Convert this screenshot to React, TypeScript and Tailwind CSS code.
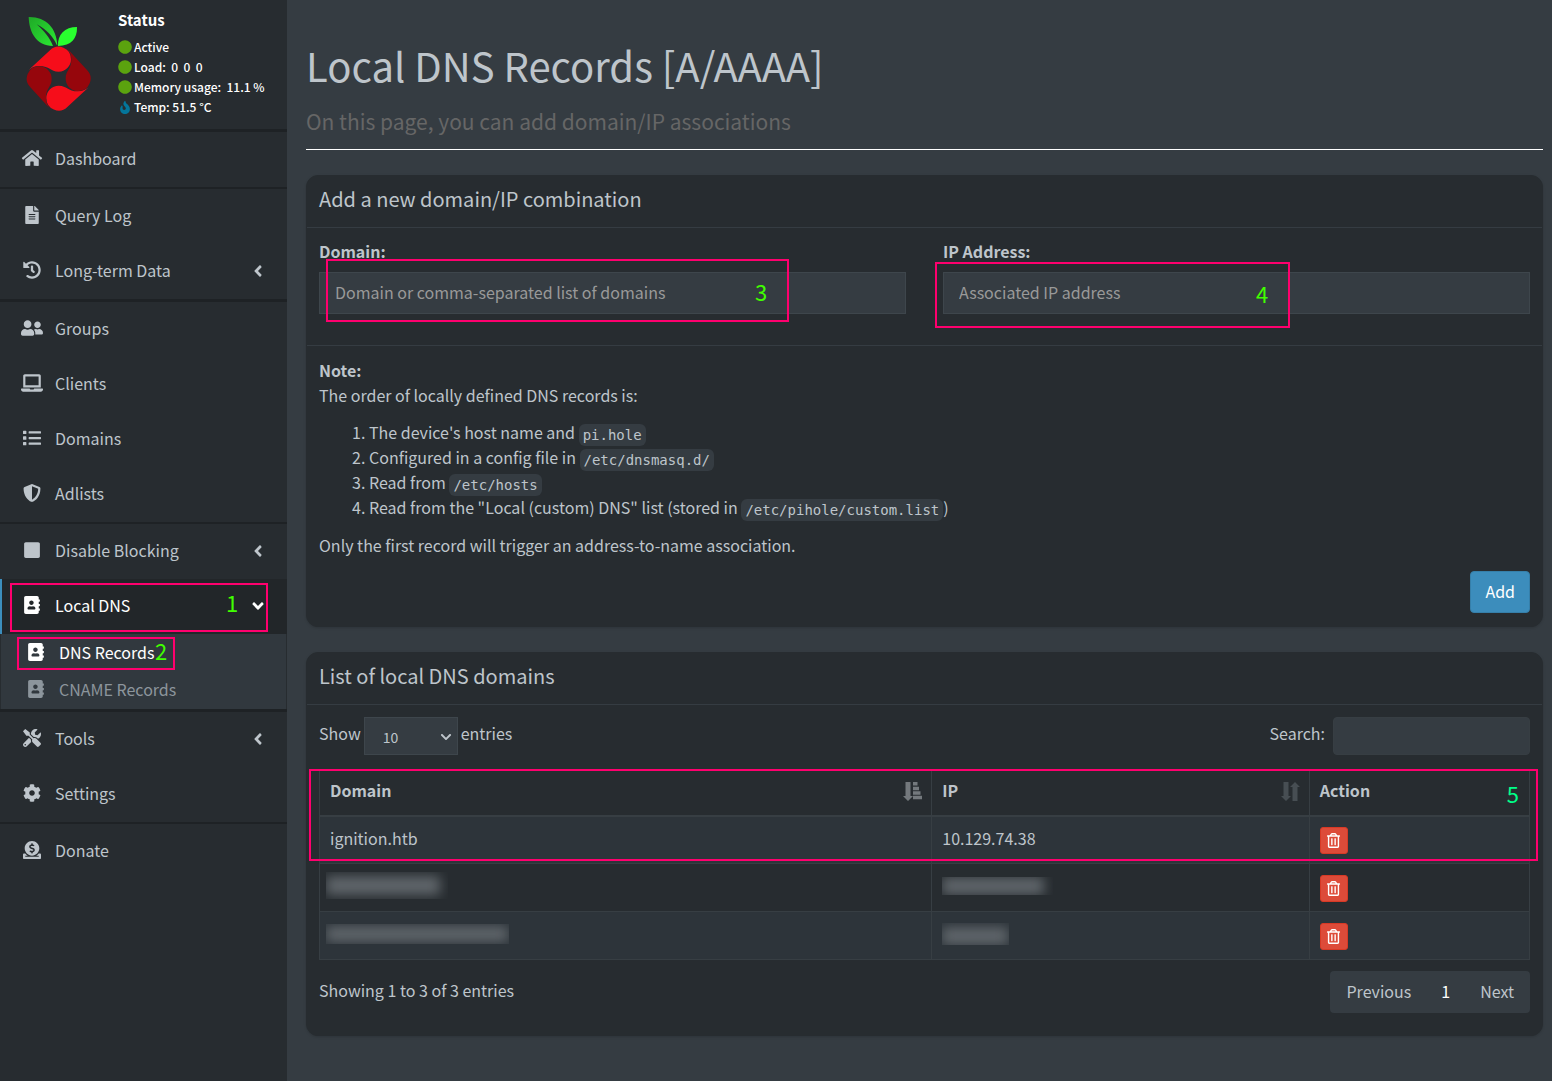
import { useState, type ReactNode } from "react";
import {
  FaAddressBook,
  FaAngleDown,
  FaAngleLeft,
  FaChevronDown,
  FaCircle,
  FaCog,
  FaDonate,
  FaFileAlt,
  FaFire,
  FaHistory,
  FaHome,
  FaLaptop,
  FaList,
  FaRegTrashAlt,
  FaShieldAlt,
  FaSquare,
  FaTools,
  FaUserFriends,
} from "react-icons/fa";
import type { IconType } from "react-icons";

const PETAL =
  "M86 210 L150 151 A37 37 0 0 1 213 178 A37 37 0 0 1 176 215 C150 215 150 198 118 198 C104 198 94 203 86 210 Z";

function Logo() {
  return (
    <svg viewBox="78 48 198 288" className="h-24 w-[66px] shrink-0" aria-label="Pi-hole" role="img">
      <defs>
        <linearGradient id="leaf" x1="0" y1="0" x2="1" y2="1">
          <stop offset="0" stopColor="#1fa827" />
          <stop offset="1" stopColor="#2bea33" />
        </linearGradient>
      </defs>
      <path d="M86 51 C138 50 170 84 172 136 L170 134 C160 112 140 88 110 73 C130 90 150 114 159 138 C108 136 88 98 86 51 Z" fill="url(#leaf)" />
      <path d="M231 81 C232 116 214 137 174 138 C172 104 194 81 231 81 Z" fill="#29ff2f" />
      <path d={PETAL} fill="#f60d1a" />
      <path d={PETAL} fill="#f60d1a" transform="rotate(180 176 236)" />
      <path d={PETAL} fill="#96060c" transform="rotate(-90 176 236)" />
      <path d={PETAL} fill="#96060c" transform="rotate(90 176 236)" />
    </svg>
  );
}

function SortIcon({ sorted }: { sorted?: boolean }) {
  return (
    <svg
      viewBox="0 0 19 20"
      className={`h-5 w-[19px] ${sorted ? "text-[#74797d]" : "text-[#474e53]"}`}
      fill="currentColor"
      aria-hidden="true"
    >
      <path d="M2.500 0h5v14h2.500L5 19 0 14h2.500z" />
      {sorted ? (
        <path d="M10 0h4.500v3.500H10zM10 4.700h6v3.500h-6zM10 9.200h7.500v3.500H10zM10 13.800h9v3.500h-9z" />
      ) : (
        <path d="M11.500 19h5V5H19l-5-5-5 5h2.500z" />
      )}
    </svg>
  );
}

function Marker({ className, children }: { className: string; children: ReactNode }) {
  return <span className={`pointer-events-none absolute text-[22px] leading-6 ${className}`}>{children}</span>;
}

function Frame({ className }: { className: string }) {
  return <span className={`pointer-events-none absolute border-2 border-[#ff006e] ${className}`} />;
}

function NavLink({ icon: Icon, label, arrow }: { icon: IconType; label: string; arrow?: boolean }) {
  return (
    <a href="#" className="flex h-[55px] items-center pr-5 pb-[3px] pl-[21px] hover:text-white">
      <Icon className="h-[18px] w-[22px]" />
      <span className="ml-3 flex-1">{label}</span>
      {arrow && <FaAngleLeft className="mt-0.5 size-[18px]" />}
    </a>
  );
}

function SubLink({ label, active }: { label: string; active?: boolean }) {
  return (
    <a href="#" className={`flex flex-1 items-center pb-0.5 pl-[26px] ${active ? "text-white" : "text-[#8c959c]"}`}>
      <FaAddressBook className="size-[18px]" />
      <span className="ml-[14px]">{label}</span>
    </a>
  );
}

function Status({ children, temp }: { children: ReactNode; temp?: boolean }) {
  return (
    <div className="flex h-5 items-center gap-0.5 text-xs font-medium whitespace-pre">
      {temp ? (
        <FaFire className="h-[13px] w-[14px] text-[#04759a]" />
      ) : (
        <FaCircle className="size-[14px] text-[#5ba30f]" />
      )}
      {children}
    </div>
  );
}

function Sidebar() {
  return (
    <aside className="flex w-[287px] shrink-0 flex-col bg-[#272c30]">
      <div className="flex h-[129px] gap-[26px] pt-4 pl-[26px] text-white">
        <Logo />
        <div className="-mt-2">
          <p className="mb-[5px] text-[15px] leading-6 font-bold">Status</p>
          <Status>Active</Status>
          <Status>{"Load:  0  0  0"}</Status>
          <Status>{"Memory usage:  11.1 %"}</Status>
          <Status temp>Temp: 51.5 °C</Status>
        </div>
      </div>
      <nav aria-label="Main">
        <div className="border-t-3 border-[#1e2225]">
          <NavLink icon={FaHome} label="Dashboard" />
        </div>
        <div className="border-t-2 border-[#1e2225]">
          <NavLink icon={FaFileAlt} label="Query Log" />
          <NavLink icon={FaHistory} label="Long-term Data" arrow />
        </div>
        <div className="border-t-3 border-[#1e2225]">
          <NavLink icon={FaUserFriends} label="Groups" />
          <NavLink icon={FaLaptop} label="Clients" />
          <NavLink icon={FaList} label="Domains" />
          <NavLink icon={FaShieldAlt} label="Adlists" />
        </div>
        <div className="border-t-2 border-[#1e2225]">
          <NavLink icon={FaSquare} label="Disable Blocking" arrow />
          <div className="relative">
            <a
              href="#"
              className="flex h-[55px] items-center border-l-2 border-[#3c8dbc] bg-[#222629] pr-5 pb-[3px] pl-[19px] text-white"
            >
              <FaAddressBook className="h-[18px] w-[22px]" />
              <span className="ml-3 flex-1">Local DNS</span>
              <FaAngleDown className="mt-0.5 size-[18px]" />
            </a>
            <Frame className="top-1 left-2.5 h-[49px] w-[258px]" />
            <Marker className="top-[11px] left-[226px] text-[#40ff00]">1</Marker>
          </div>
          <div className="relative mx-px flex h-[75px] flex-col bg-[#31383e]">
            <SubLink label="DNS Records" active />
            <SubLink label="CNAME Records" />
            <Frame className="top-[3px] left-4 h-[33px] w-[158px]" />
            <Marker className="top-1 left-[154px] text-[#40ff00]">2</Marker>
          </div>
        </div>
        <div className="border-t-3 border-[#1e2225]">
          <NavLink icon={FaTools} label="Tools" arrow />
          <NavLink icon={FaCog} label="Settings" />
        </div>
        <div className="border-t-2 border-[#1e2225]">
          <NavLink icon={FaDonate} label="Donate" />
        </div>
      </nav>
    </aside>
  );
}

function Panel({ title, children }: { title: string; children: ReactNode }) {
  return (
    <section className="rounded-xl border border-[#272c30] bg-[#272c30] shadow-sm">
      <h2 className="border-b border-[#353c42] px-3 pt-[7px] pb-3 text-xl leading-8">{title}</h2>
      {children}
    </section>
  );
}

function Code({ children }: { children: ReactNode }) {
  return (
    <code className="rounded-md bg-[#353c42] px-1 py-[3px] align-[-1px] font-['DejaVu_Sans_Mono',monospace] text-sm leading-4">
      {children}
    </code>
  );
}

function AddPanel() {
  const [domain, setDomain] = useState("");
  const [ip, setIp] = useState("");
  const field =
    "mt-2 h-[42px] w-full border border-[#3e464c] bg-[#353c42] px-[15px] pb-0.5 outline-none placeholder:text-[#999]";
  return (
    <Panel title="Add a new domain/IP combination">
      <div className="grid grid-cols-2 gap-[37px] border-b border-[#353c42] px-3 pt-[11px] pb-[31px]">
        <div className="relative">
          <label htmlFor="domain" className="block leading-[25px] font-bold">Domain:</label>
          <input id="domain" className={field} placeholder="Domain or comma-separated list of domains" value={domain} onChange={(e) => setDomain(e.target.value)} />
          <Frame className="top-5 left-[7px] h-[63px] w-[463px]" />
          <Marker className="top-10 left-[436px] text-[#40ff00]">3</Marker>
        </div>
        <div className="relative">
          <label htmlFor="ip" className="block leading-[25px] font-bold">IP Address:</label>
          <input id="ip" className={field} placeholder="Associated IP address" value={ip} onChange={(e) => setIp(e.target.value)} />
          <Frame className="top-[23px] -left-2 h-[66px] w-[355px]" />
          <Marker className="top-[42px] left-[313px] text-[#40ff00]">4</Marker>
        </div>
      </div>
      <div className="px-3 pt-3 pb-[13px] leading-[25px]">
        <p className="font-bold">Note:</p>
        <p>The order of locally defined DNS records is:</p>
        <ol className="mt-3 mb-[13px] list-decimal pl-[50px]">
          <li>The device's host name and <Code>pi.hole</Code></li>
          <li>Configured in a config file in <Code>/etc/dnsmasq.d/</Code></li>
          <li>Read from <Code>/etc/hosts</Code></li>
          <li>Read from the "Local (custom) DNS" list (stored in <Code>/etc/pihole/custom.list</Code>)</li>
        </ol>
        <p>Only the first record will trigger an address-to-name association.</p>
        <div className="mt-[13px] flex justify-end">
          <button type="button" className="h-[42px] rounded-sm border border-[#367fa9] bg-[#3c8dbc] px-[14px] pb-0.5 text-white">
            Add
          </button>
        </div>
      </div>
    </Panel>
  );
}

function Redacted({ box, bar }: { box: string; bar: string }) {
  return (
    <span className={`block overflow-hidden ${box}`}>
      <span className={`block bg-[#5f656a] blur-[6px] ${bar}`} />
    </span>
  );
}

function DeleteButton({ name }: { name: string }) {
  return (
    <button type="button" aria-label={`Delete ${name}`} className="flex h-[27px] w-7 items-center justify-center rounded-[3px] border border-[#d73925] bg-[#dd4b39] text-white">
      <FaRegTrashAlt className="size-[15px]" />
    </button>
  );
}

function ListPanel() {
  const cell = "border border-[#373e43] px-[10px]";
  const rows = [
    { id: "ignition.htb", domain: <>ignition.htb</>, ip: <>10.129.74.38</> },
    {
      id: "record 2",
      domain: <Redacted box="-ml-1 h-[27px] w-[122px]" bar="mt-1 h-[19px] w-[114px]" />,
      ip: <Redacted box="h-[18px] w-[111px]" bar="h-[18px] w-[102px]" />,
    },
    {
      id: "record 3",
      domain: <Redacted box="-ml-1 h-5 w-[183px]" bar="mt-0.5 h-4 w-[182px]" />,
      ip: <Redacted box="h-[22px] w-[67px]" bar="mt-1 h-[18px] w-[66px]" />,
    },
  ];
  return (
    <Panel title="List of local DNS domains">
      <div className="px-3 pt-3 pb-[22px]">
        <div className="flex justify-between">
          <div className="flex gap-[3px]">
            <label htmlFor="length" className="leading-8">Show</label>
            <div className="relative">
              <select id="length" defaultValue="10" className="h-[38px] w-[94px] appearance-none border border-[#3e464c] bg-[#353c42] px-[18px] pt-0.5 text-sm outline-none">
                <option>10</option>
                <option>25</option>
                <option>50</option>
                <option>100</option>
              </select>
              <FaChevronDown className="pointer-events-none absolute top-[14px] right-[6px] size-3" />
            </div>
            <span className="leading-8">entries</span>
          </div>
          <div className="flex gap-2">
            <label htmlFor="search" className="leading-8">Search:</label>
            <input id="search" type="search" className="h-[38px] w-[197px] rounded-sm border border-[#373e43] bg-[#353c42] px-3 outline-none" />
          </div>
        </div>
        <div className="relative mt-[14px]">
          <table className="w-full table-fixed border-collapse text-left">
            <thead>
              <tr className="h-[46px]">
                <th className={`w-[50.6%] border-b-2 pb-1 ${cell}`}>
                  <span className="flex items-center justify-between">
                    Domain
                    <span className="-mr-px pt-1"><SortIcon sorted /></span>
                  </span>
                </th>
                <th className={`w-[31.2%] border-b-2 pb-1 ${cell}`}>
                  <span className="flex items-center justify-between">
                    IP
                    <span className="-mr-px pt-1"><SortIcon /></span>
                  </span>
                </th>
                <th className={`border-b-2 pb-1 ${cell}`}>Action</th>
              </tr>
            </thead>
            <tbody>
              {rows.map((r) => (
                <tr key={r.id} className="h-12 odd:bg-[#2d343a]">
                  <td className={`pb-1 ${cell}`}>{r.domain}</td>
                  <td className={`pb-1 ${cell}`}>{r.ip}</td>
                  <td className={`pt-0.5 ${cell}`}><DeleteButton name={r.id} /></td>
                </tr>
              ))}
            </tbody>
          </table>
          <Frame className="top-0 -right-2 -left-2.5 h-[92px]" />
          <Marker className="top-3 right-[11px] text-[#00ff88]">5</Marker>
        </div>
        <div className="mt-[11px] flex justify-between">
          <p className="leading-[38px]">Showing 1 to 3 of 3 entries</p>
          <div className="flex h-[42px] items-center rounded-sm bg-[#353c42] pb-0.5">
            <button type="button" className="px-4">Previous</button>
            <button type="button" className="px-[14px] text-white">1</button>
            <button type="button" className="px-4">Next</button>
          </div>
        </div>
      </div>
    </Panel>
  );
}

export default function App() {
  return (
    <div className="flex min-h-screen bg-[#353c42] font-['Noto_Sans_CJK_SC',sans-serif] text-base leading-6 text-[#bec5cb]">
      <Sidebar />
      <main className="min-w-0 flex-1 pt-[35px] pr-[9px] pl-[19px]">
        <header className="mb-[25px] border-b border-white pb-3">
          <h1 className="text-[40px] leading-[60px]">Local DNS Records [A/AAAA]</h1>
          <p className="mt-[10px] text-[21px] leading-8 text-[#666]">On this page, you can add domain/IP associations</p>
        </header>
        <div className="flex flex-col gap-[25px]">
          <AddPanel />
          <ListPanel />
        </div>
      </main>
    </div>
  );
}
